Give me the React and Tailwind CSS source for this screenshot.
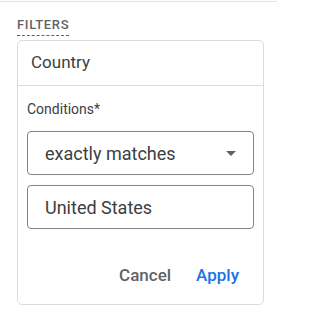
import React from 'react';

const FilterCard = () => {
  return (
    <div className="mt-[4px] w-[247px] rounded-[5px] border border-[#dadce0] bg-white">
      <div className="flex h-[45px] items-center border-b border-[#dadce0] px-[13px] text-[17px] text-[#3c4043]">
        Country
      </div>
      <div className="px-[9px] pt-[14px]">
        <div className="text-[14px] leading-[18px] text-[#3c4043]">Conditions*</div>
        <div className="mt-[13px] flex h-[44px] items-center justify-between rounded-[4px] border border-[#80868b] pl-[17px] pr-[17px] text-[18px] text-[#3c4043]">
          <span>exactly matches</span>
          <svg width="10" height="5" viewBox="0 0 10 5" className="mt-[1px]">
            <path d="M0 0h10L5 5z" fill="#5f6368" />
          </svg>
        </div>
        <div className="mt-[10px] flex h-[44px] items-center rounded-[4px] border border-[#80868b] pl-[17px] text-[18px] text-[#3c4043]">
          United States
        </div>
      </div>
      <div className="flex items-center justify-end gap-[25px] pb-[19px] pr-[24px] pt-[36px] text-[17px] font-medium leading-[20px]">
        <button className="text-[#5f6368]">Cancel</button>
        <button className="text-[#1a73e8]">Apply</button>
      </div>
    </div>
  );
};

export default function App() {
  return (
    <div className="h-[313px] w-[277px] bg-white" style={{ fontFamily: 'Roboto, "Liberation Sans", sans-serif' }}>
      <div className="h-px" />
      <div className="h-px bg-[#e3e3e3]" />
      <div className="pl-[17px] pt-[10px]">
        <span className="inline-block border-b border-dashed border-[#5f6368] pb-[2px] text-[13px] font-medium leading-[16px] tracking-[0.05em] text-[#5f6368]">
          FILTERS
        </span>
        <FilterCard />
      </div>
    </div>
  );
}
